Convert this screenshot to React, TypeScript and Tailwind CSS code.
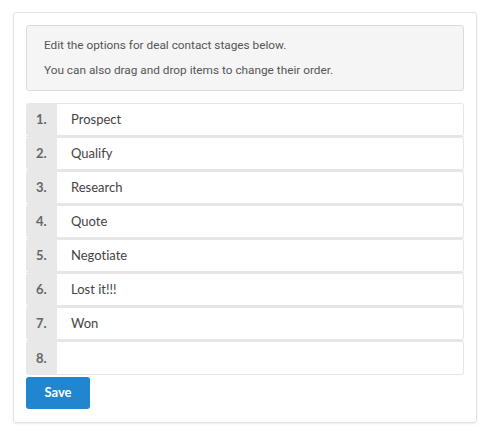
import React from "react"

const stages: string[] = ["Prospect", "Qualify", "Research", "Quote", "Negotiate", "Lost it!!!", "Won", ""]

export default function App() {
  return (
    <div className="w-[487px] h-[433px] bg-white pt-[12px] pl-[13px] [font-variant-ligatures:none]" style={{ fontFamily: "Lato, 'Liberation Sans', sans-serif" }}>
      <div className="w-[464px] h-[411px] border border-[#e3e3e3] rounded-[3px] shadow-[0_1px_2px_rgba(0,0,0,0.08)] p-[12px]">
        <div
          className="h-[66px] bg-[#f5f5f5] border border-[#dcdcdc] rounded-[3px] px-[17px] pt-[11px] text-[11.8px] text-[#555]"
          style={{ fontFamily: "Roboto, 'Liberation Sans', sans-serif" }}
        >
          <p className="leading-[16px]">Edit the options for deal contact stages below.</p>
          <p className="leading-[16px] mt-[9px]">You can also drag and drop items to change their order.</p>
        </div>
        <div className="mt-[12px] flex flex-col">
          {stages.map((stage, i) => (
            <div key={i} className="flex h-[34px] border-b border-[#e6e6e6] last:border-b-0">
              <div className="w-[31px] bg-[#e8e8e8] rounded-l-[3px] flex items-center pt-[1px] pl-[10px] text-[13px] font-bold text-[#666]">
                {i + 1}.
              </div>
              <div className="flex-1 bg-white border border-[#e6e6e6] border-l-0 rounded-r-[3px] flex items-center pt-[1px] pl-[14px] text-[13px] text-[#444]">
                {stage}
              </div>
            </div>
          ))}
        </div>
        <button className="mt-[2px] w-[64px] h-[32px] bg-[#2185d0] rounded-[3px] text-white font-bold text-[13px]">
          Save
        </button>
      </div>
    </div>
  )
}
